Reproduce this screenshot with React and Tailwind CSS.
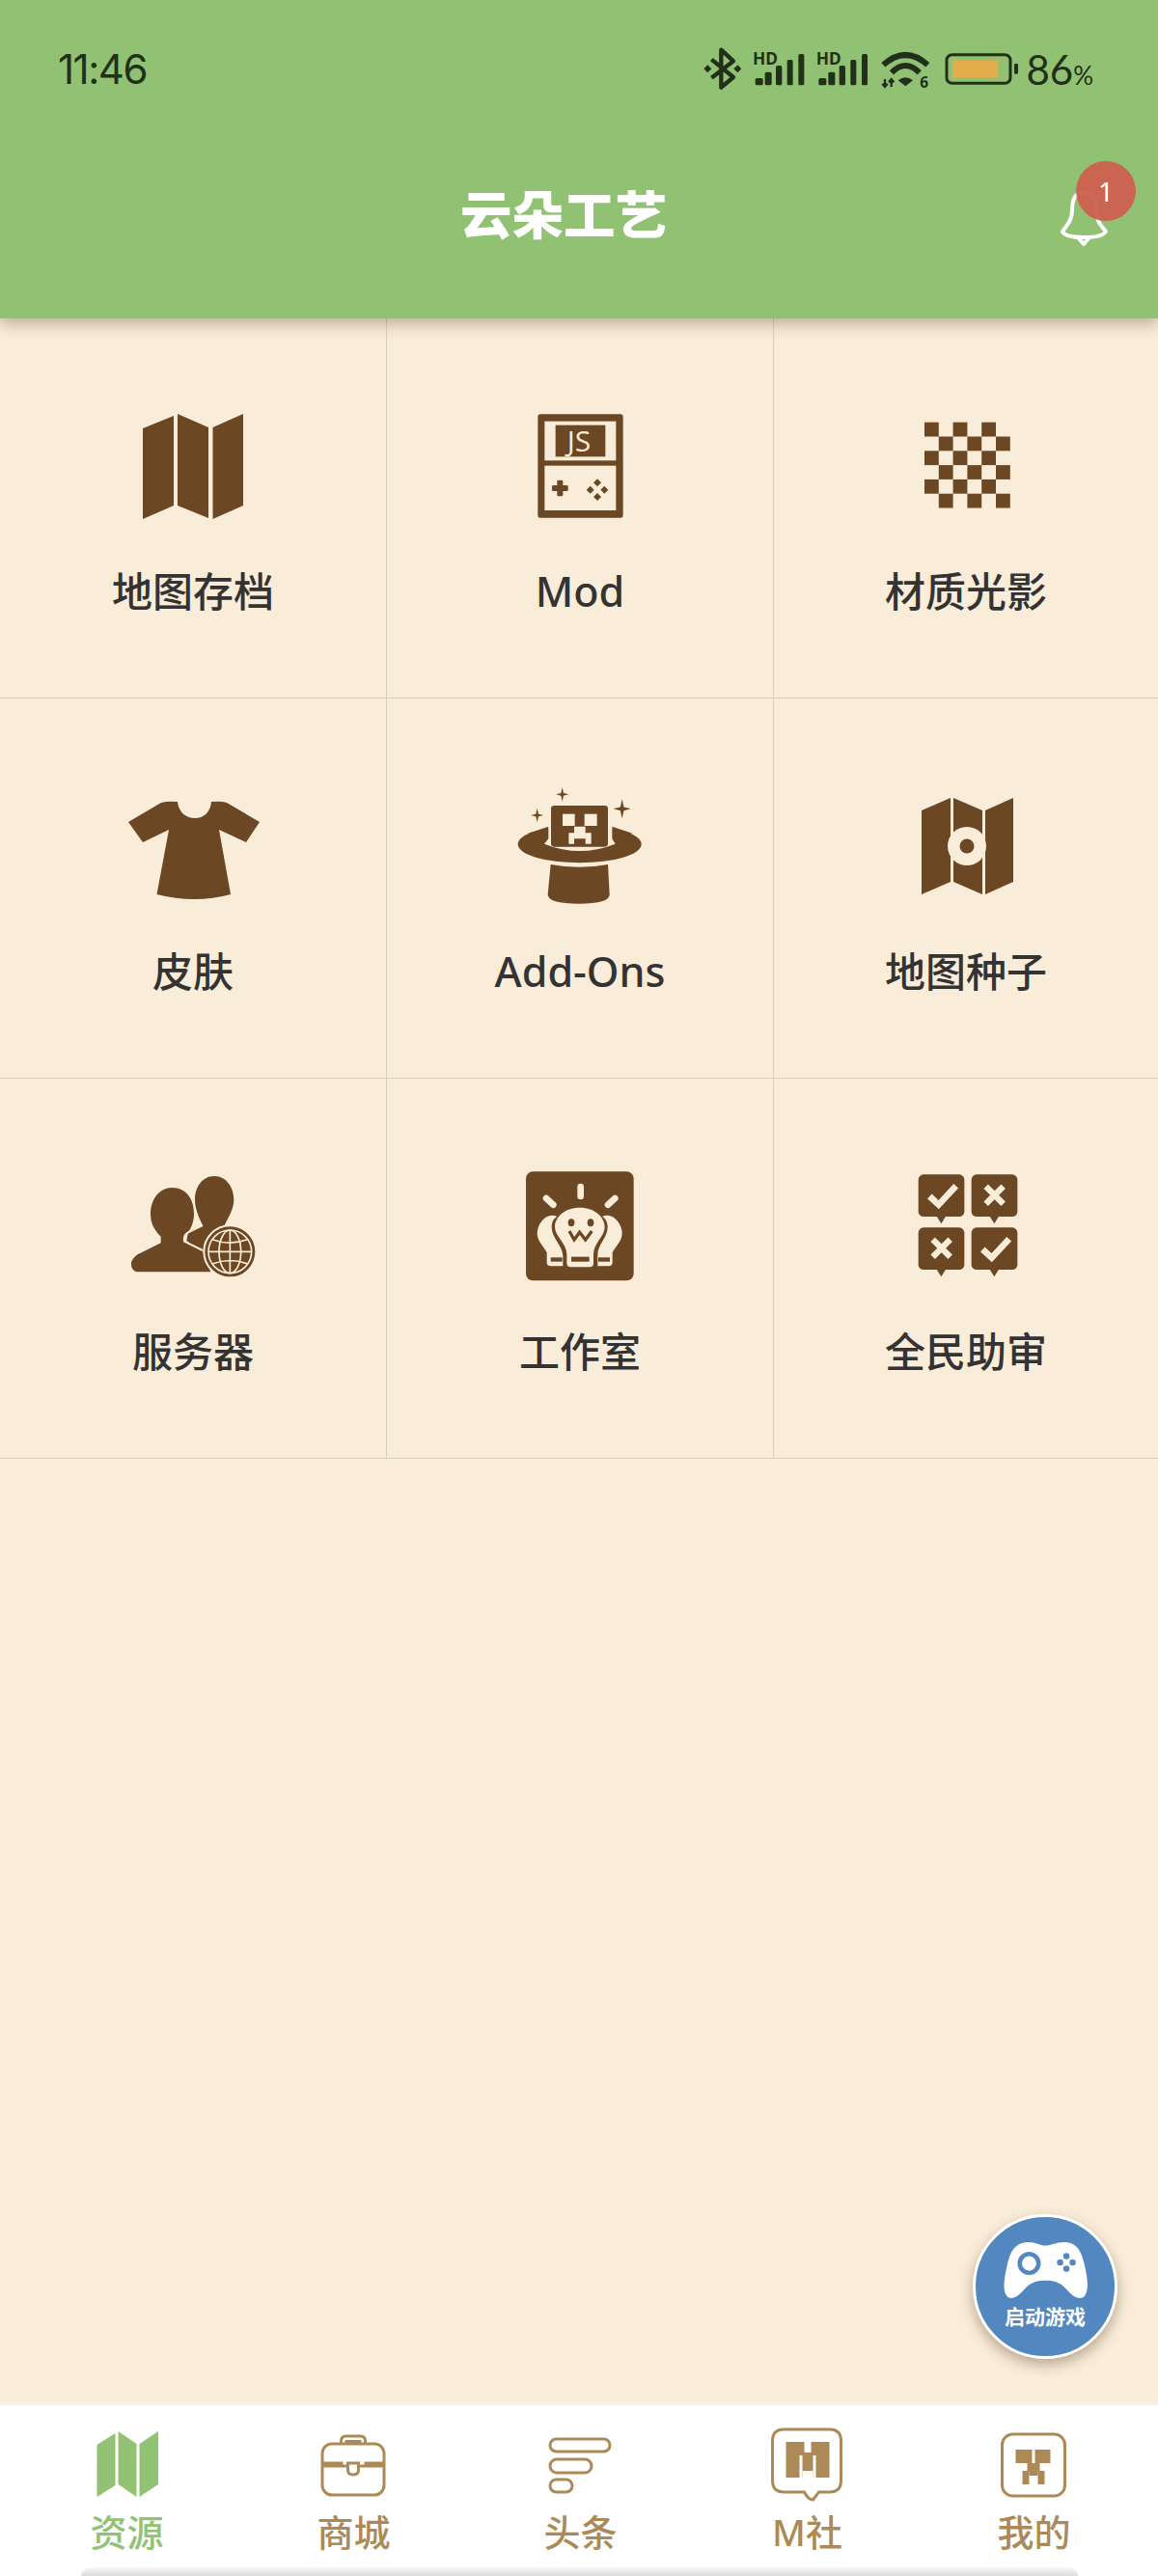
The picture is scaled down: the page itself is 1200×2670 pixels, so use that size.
import React from "react";

const B = "#6b4723";
const C = "#f9ecd9";
const T = "#ab8a57";
const G = "#92c274";

function IconBox({ vb, children }) {
  return (
    <svg viewBox={vb} className="w-[200px] h-[160px] block" fill={B}>
      {children}
    </svg>
  );
}

function MapIcon() {
  return (
    <IconBox vb="100 403 200 160">
      <polygon points="148,444 180,431 180,524 148,538" />
      <polygon points="184,429 216,443 216,537 184,524" />
      <polygon points="220.5,443 252,429 252,524 220.5,538" />
    </IconBox>
  );
}

function ModIcon() {
  return (
    <IconBox vb="3 -21 600 480">
      <rect x="172" y="58" width="265" height="322" rx="8" />
      <rect x="193" y="80" width="222" height="122" fill={C} />
      <rect x="193" y="218" width="222" height="139" fill={C} />
      <rect x="227" y="92" width="155" height="98" />
      <text x="300" y="174" textAnchor="middle" fontSize="90" fill={C} fontFamily="'Open Sans',sans-serif" fontWeight="400">JS</text>
      <rect x="216" y="279" width="50" height="18" rx="4" />
      <rect x="232" y="263" width="18" height="50" rx="4" />
      <g>
        <polygon points="357,259 369,271 357,283 345,271" />
        <polygon points="357,303 369,315 357,327 345,315" />
        <polygon points="335,281 347,293 335,305 323,293" />
        <polygon points="379,281 391,293 379,305 367,293" />
      </g>
    </IconBox>
  );
}

function CheckerIcon() {
  const cells = [];
  for (let r = 0; r < 6; r++) {
    for (let c = 0; c < 6; c++) {
      if ((r + c) % 2 === 0) cells.push(<rect key={r + "-" + c} x={958 + c * 14.8} y={437.7 + r * 14.8} width="14.8" height="14.8" />);
    }
  }
  return <IconBox vb="901 403 200 160">{cells}</IconBox>;
}

function ShirtIcon() {
  return (
    <IconBox vb="100 797 200 160">
      <path d="M133 852 L148 873 L175 860 L162.5 927 Q202 937 239 927 L227 860 L255 873 L269 852 L235 832 Q229 830 219 831 C218 842 211 848 202 848 C193 848 185 842 184 831 Q174 830 167 832 Z" />
    </IconBox>
  );
}

function star(cx, cy, r) {
  const k = r * 0.18;
  return `M${cx} ${cy - r} L${cx + k} ${cy - k} L${cx + r * 0.9} ${cy} L${cx + k} ${cy + k} L${cx} ${cy + r} L${cx - k} ${cy + k} L${cx - r * 0.9} ${cy} L${cx - k} ${cy - k} Z`;
}

function HatIcon() {
  return (
    <IconBox vb="3 21 600 480">
      <ellipse cx="302" cy="255" rx="192" ry="58" />
      <path d="M205 200 L140 222 L205 225 Z M403 200 L468 222 L403 225 Z" />
      <path d="M205 190 V238 L192 254 Q302 298 413 254 L403 238 V190 Z" fill={C} />
      <rect x="213" y="135" width="177" height="128" rx="10" />
      <path d="M213 240 Q302 280 390 240 V220 H213 Z" />
      <rect x="249" y="161" width="38" height="37" fill={C} />
      <rect x="317" y="161" width="39" height="37" fill={C} />
      <path d="M285 200 H320 V220 H338 V254 H320 V238 H285 V254 H268 V220 H285 Z" fill={C} />
      <path d="M212 318 Q300 335 390 318 L395 412 Q395 440 300 440 Q203 440 203 412 Z" />
      <path d={star(248, 100, 22)} />
      <path d={star(170, 165, 22)} />
      <path d={star(434, 145, 30)} />
    </IconBox>
  );
}

function SeedIcon() {
  return (
    <IconBox vb="901 797 200 160">
      <polygon points="955,840 985,827 985,914 955,927" />
      <polygon points="988,827 1018,840 1018,927 988,914" />
      <polygon points="1021,840 1050,827 1050,914 1021,927" />
      <circle cx="1002" cy="877" r="20" fill={C} />
      <circle cx="1002" cy="877" r="7.5" />
    </IconBox>
  );
}

function PeopleIcon() {
  return (
    <IconBox vb="-30 3 600 480">
      <path d="M336 87 C375 87 397 125 397 160 C397 190 380 215 368 240 L368 320 L290 320 L250 288 L255 262 L300 240 C290 220 276 190 276 160 C276 120 300 87 336 87 Z" />
      <path d="M205 123 C250 123 273 160 273 205 C273 240 255 265 240 280 L240 290 L300 320 L325 385 L95 385 Q76 380 78 355 Q85 335 110 325 L170 295 L170 275 C150 255 138 235 138 205 C138 160 165 123 205 123 Z" />
      <path d="M300 240 L255 262 Q240 270 243 290 L300 318" fill="none" stroke={C} strokeWidth="6" />
      <circle cx="385" cy="322" r="81" stroke={C} strokeWidth="6" />
      <g fill="none" stroke={C} strokeWidth="5">
        <circle cx="385" cy="322" r="67" />
        <ellipse cx="385" cy="322" rx="34" ry="67" />
        <path d="M385 255 V389 M318 322 H452 M330 284 Q385 305 440 284 M330 360 Q385 339 440 360" />
      </g>
    </IconBox>
  );
}

function BulbIcon() {
  return (
    <IconBox vb="3 3 600 480">
      <rect x="135" y="73" width="335" height="339" rx="22" />
      <g stroke={C} strokeWidth="20" strokeLinecap="round">
        <line x1="305" y1="120" x2="305" y2="150" />
        <line x1="198" y1="156" x2="220" y2="176" />
        <line x1="412" y1="156" x2="390" y2="176" />
      </g>
      <g fill={C}>
        <path d="M302 185 C350 185 380 215 380 245 C380 275 345 295 345 330 L345 358 Q345 370 333 370 L275 370 Q262 370 262 358 L262 330 C262 295 225 275 225 245 C225 215 255 185 302 185 Z" />
        <path d="M210 210 C185 215 170 245 170 265 C170 290 190 305 200 325 L200 355 Q200 367 212 367 L250 367 L250 335 C248 300 215 280 215 245 C215 230 222 218 232 213 Q222 208 210 210 Z" />
        <path d="M394 210 C419 215 434 245 434 265 C434 290 414 305 404 325 L404 355 Q404 367 392 367 L358 367 L358 335 C356 300 389 280 389 245 C389 230 382 218 372 213 Q382 208 394 210 Z" />
      </g>
      <rect x="276" y="338" width="56" height="15" />
      <rect x="212" y="340" width="36" height="13" />
      <rect x="360" y="340" width="36" height="13" />
      <ellipse cx="276" cy="232" rx="10" ry="12" />
      <ellipse cx="336" cy="232" rx="10" ry="12" />
      <path d="M270 258 L285 285 L302 262 L320 285 L340 258" fill="none" stroke={B} strokeWidth="10" />
    </IconBox>
  );
}

function Bubble({ x, y, check }) {
  return (
    <g transform={`translate(${x} ${y})`}>
      <rect x="155" y="82" width="143" height="131" rx="16" />
      <polygon points="212,212 240,212 226,235" />
      {check ? (
        <path d="M190 150 L218 176 L272 118" fill="none" stroke={C} strokeWidth="20" />
      ) : (
        <path d="M200 119 L254 173 M254 119 L200 173" fill="none" stroke={C} strokeWidth="19" />
      )}
    </g>
  );
}

function ReviewIcon() {
  return (
    <IconBox vb="3 3 600 480">
      <Bubble x={0} y={0} check />
      <Bubble x={165} y={0} />
      <Bubble x={0} y={165} />
      <Bubble x={165} y={165} check />
    </IconBox>
  );
}

const items = [
  ["地图存档", MapIcon, false],
  ["Mod", ModIcon, true],
  ["材质光影", CheckerIcon, false],
  ["皮肤", ShirtIcon, false],
  ["Add-Ons", HatIcon, true],
  ["地图种子", SeedIcon, false],
  ["服务器", PeopleIcon, false],
  ["工作室", BulbIcon, false],
  ["全民助审", ReviewIcon, false],
];

function StatusIcons() {
  const bars = (x0) => (
    <g>
      <rect x={x0 + 8} y="153" width="24" height="22" rx="5" />
      <rect x={x0 + 38} y="134" width="21" height="41" rx="5" />
      <rect x={x0 + 72} y="114" width="19" height="61" rx="5" />
      <rect x={x0 + 107} y="96" width="18" height="79" rx="5" />
      <rect x={x0 + 142} y="78" width="18" height="97" rx="5" />
      <text x={x0} y="110" fontSize="52" fontWeight="700" fontFamily="'Noto Sans',sans-serif">HD</text>
    </g>
  );
  return (
    <svg viewBox="0 0 1080 240" className="w-[360px] h-[80px] block" fill="#22301a">
      <path d="M112 95 L180 150 L142 182 L142 65 L180 100 L112 152" fill="none" stroke="#22301a" strokeWidth="13" strokeLinejoin="round" />
      <polygon points="100,112 112,124 100,136 88,124" />
      <polygon points="193,112 205,124 193,136 181,124" />
      {bars(240)}
      {bars(437)}
      <path d="M646 112 Q715 50 784 112 M672 136 Q715 92 758 136" fill="none" stroke="#22301a" strokeWidth="18" />
      <path d="M692 160 Q715 142 738 160 L715 178 Z" />
      <path d="M651 156 V180 M643 170 L651 180 L659 170 M671 180 V156 M663 166 L671 156 L679 166" fill="none" stroke="#22301a" strokeWidth="7" />
      <text x="760" y="183" fontSize="46" fontWeight="700" fontFamily="'Noto Sans',sans-serif">6</text>
      <rect x="843" y="80" width="198" height="89" rx="17" fill="none" stroke="#22301a" strokeWidth="9" />
      <rect x="862" y="97" width="141" height="55" fill="#e3ac4d" />
      <rect x="1053" y="108" width="12" height="32" rx="4" />
    </svg>
  );
}

function NavIcon({ vb, children }) {
  return (
    <svg viewBox={vb} className="w-[80px] h-[80px] block" fill="none" stroke={T} strokeWidth="3">
      {children}
    </svg>
  );
}

const nav = [
  {
    label: "资源",
    active: true,
    icon: (
      <NavIcon vb="92.5 2515 80 80">
        <g fill={G} stroke="none">
          <polygon points="101,2534 120,2522 120,2576 101,2588" />
          <polygon points="123,2520 142,2533 142,2588 123,2575" />
          <polygon points="145,2533 164.5,2520 164.5,2575 145,2588" />
        </g>
      </NavIcon>
    ),
  },
  {
    label: "商城",
    icon: (
      <NavIcon vb="327.5 2515 80 80">
        <rect x="334.5" y="2533" width="64" height="53" rx="10" />
        <path d="M334.5 2553 H356 M378 2553 H398.5 M334.5 2556 H360 M373 2556 H398.5" />
        <path d="M354 2533 V2530 Q354 2525 359 2525 H374 Q379 2525 379 2530 V2533" />
        <path d="M358 2533 V2529 H375 V2533" fill={T} stroke="none" />
        <path d="M361 2553 V2560 Q361 2565 366.5 2565 Q372 2565 372 2560 V2553 Z" />
      </NavIcon>
    ),
  },
  {
    label: "头条",
    icon: (
      <NavIcon vb="562.5 2515 80 80">
        <rect x="570.5" y="2528" width="62" height="13" rx="6.5" />
        <rect x="570.5" y="2549" width="43" height="14" rx="7" />
        <rect x="570.5" y="2570" width="23" height="13" rx="6.5" />
      </NavIcon>
    ),
  },
  {
    label: "M社",
    icon: (
      <NavIcon vb="797.5 2515 80 80">
        <path d="M813 2518 H860 Q872 2518 872 2530 V2571 Q872 2583 860 2583 H849 L843 2591 Q838 2591 834 2583 H813 Q801 2583 801 2571 V2530 Q801 2518 813 2518 Z" />
        <rect x="815" y="2531" width="45" height="37" fill={T} stroke="none" />
        <g fill="#fff" stroke="none">
          <rect x="834" y="2531" width="7" height="11" />
          <rect x="829" y="2545" width="3" height="23" />
          <rect x="843" y="2545" width="3" height="23" />
          <rect x="832" y="2561" width="11" height="7" />
        </g>
      </NavIcon>
    ),
  },
  {
    label: "我的",
    icon: (
      <NavIcon vb="1032.5 2515 80 80">
        <rect x="1039" y="2523" width="65" height="64" rx="11" />
        <g fill={T} stroke="none">
          <rect x="1053" y="2539" width="17" height="14" />
          <rect x="1073" y="2539" width="16" height="14" />
          <rect x="1065" y="2553" width="13" height="8" />
          <rect x="1060" y="2561" width="7" height="14" />
          <rect x="1076" y="2561" width="7" height="14" />
          <rect x="1067" y="2561" width="9" height="5" />
        </g>
      </NavIcon>
    ),
  },
];

export default function App() {
  return (
    <div className="relative flex h-[2670px] w-[1200px] flex-col overflow-hidden bg-[#f9ecd9] font-['Noto_Sans','Noto_Sans_CJK_SC',sans-serif]">
      <header className="relative z-10 h-[330px] shrink-0 bg-[#91c274] shadow-[0_5px_16px_rgba(60,40,10,0.34)]">
        <div className="flex h-[110px] items-center justify-between pl-[60px] pr-[67px] pt-[30px]">
          <span className="mt-[4px] text-[42px] leading-none tracking-[-1.5px] text-[#22301a] font-['Inter',sans-serif]">11:46</span>
          <div className="flex items-center">
            <StatusIcons />
            <span className="ml-[3px] mt-[3px] text-[42px] leading-none text-[#22301a] font-['Lato',sans-serif]">
              86<span className="text-[26px]">%</span>
            </span>
          </div>
        </div>
        <div className="flex items-start justify-between pl-[477px] pr-[15px] pt-[50px]">
          <h1 className="mt-[33px] text-[53.5px] font-black leading-[60px] text-white">云朵工艺</h1>
          <div className="relative h-[100px] w-[90px]">
            <svg viewBox="1095 160 90 100" className="block h-[100px] w-[90px]" fill="none" stroke="#fff" strokeWidth="4" strokeLinejoin="round">
              <path d="M1123 199 C1114 199 1111 208 1111 218 C1111 228 1106 233 1101 240 Q1104 246 1123 246 Q1142 246 1146 240 C1140 233 1136 228 1136 218 C1136 208 1132 199 1123 199 Z" />
              <path d="M1117 246 L1123 253 L1129 246" />
            </svg>
            <div className="absolute left-[20px] top-[7px] flex h-[62px] w-[62px] items-center justify-center rounded-full bg-[#cd6050]/95 text-[28px] leading-none text-white">
              1
            </div>
          </div>
        </div>
      </header>

      <main className="grid shrink-0 grid-cols-[401px_401px_398px]">
        {items.map(([label, Icon, latin], i) => (
          <div
            key={label}
            className={
              (i % 3 === 2 ? "" : "border-r ") +
              "flex h-[394px] flex-col items-center border-b border-[#d6d0c4] pt-[73px]"
            }
          >
            <Icon />
            <div className={(latin ? "text-[43px]" : "text-[42px]") + " mt-[25px] font-medium leading-[50px] text-[#333333]"}>{label}</div>
          </div>
        ))}
      </main>

      <div className="flex-1" />

      <nav className="relative grid h-[180px] shrink-0 grid-cols-5 border-t-[3px] border-[#f5f1ea] bg-white pl-[14px] pr-[11px] pt-[22px]">
        {nav.map((n) => (
          <div key={n.label} className="flex flex-col items-center">
            {n.icon}
            <span className={(n.active ? "text-[#92c274]" : "text-[#ab8a57]") + " mt-[4px] text-[38px] font-medium leading-[50px]"}>{n.label}</span>
          </div>
        ))}
        <div className="absolute bottom-0 left-[84px] h-[9px] w-[1033px] rounded-t-[14px] bg-gradient-to-b from-[#f8f8f8] to-[#dcdcdc]" />
      </nav>

      <div className="absolute left-[1008px] top-[2295px] h-[150px] w-[150px] rounded-full border-[3px] border-white bg-[#5387bf] shadow-[0_6px_14px_rgba(60,40,10,0.35)]">
        <svg viewBox="87 87 444 444" className="block h-[144px] w-[144px]">
          <path fill="#fff" d="M255 167 C280 167 295 178 310 178 C325 178 345 167 370 167 C410 167 425 195 435 240 C445 285 450 320 435 340 C420 355 395 340 375 315 C355 295 335 290 310 290 C285 290 265 295 245 315 C225 340 200 355 187 340 C172 320 178 285 188 240 C198 195 215 167 255 167 Z" />
          <circle cx="258" cy="235" r="30" fill="#fff" stroke="#5387bf" strokeWidth="14" />
          <g fill="#5387bf">
            <circle cx="377" cy="212" r="10" />
            <circle cx="377" cy="252" r="10" />
            <circle cx="357" cy="232" r="10" />
            <circle cx="397" cy="232" r="10" />
          </g>
        </svg>
        <span className="absolute left-0 right-0 top-[89px] text-center text-[21px] font-bold leading-[28px] text-white">启动游戏</span>
      </div>
    </div>
  );
}
